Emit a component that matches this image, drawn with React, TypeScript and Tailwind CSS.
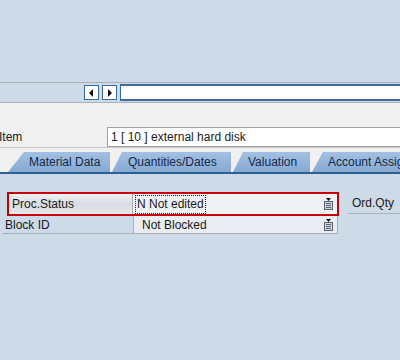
const TABS = [
  { label: 'Material Data', cls: 'ml-[8px] w-[102px] pl-[21px] [clip-path:polygon(16px_0,100%_0,100%_100%,0_100%)]' },
  { label: 'Quantities/Dates', cls: 'w-[119px] pl-[16px] [clip-path:polygon(10px_0,100%_0,100%_100%,0_100%)]' },
  { label: 'Valuation', cls: 'w-[77px] pl-[15px] [clip-path:polygon(10px_0,100%_0,100%_100%,0_100%)]' },
  { label: 'Account Assignment', cls: 'flex-1 pl-[16px] [clip-path:polygon(11px_0,100%_0,100%_100%,0_100%)]' },
];

function ArrowButton({ dir }: { dir: 'left' | 'right' }) {
  return (
    <div className="w-[15px] h-[15px] bg-white border border-[#3a6b9c] flex items-center justify-center">
      <svg width="5" height="8" viewBox="0 0 5 8">
        {dir === 'left' ? <path d="M4 0 L0 4 L4 8 Z" fill="#111" /> : <path d="M1 0 L5 4 L1 8 Z" fill="#111" />}
      </svg>
    </div>
  );
}

function DropIcon() {
  return (
    <svg width="9" height="12" viewBox="0 0 9 12" className="shrink-0">
      <path d="M2 0 H7 L4.5 3 Z" fill="#111" />
      <rect x="0.5" y="3.5" width="8" height="8" fill="#c9d6e3" stroke="#5b6570" />
      <line x1="2" y1="5.5" x2="7" y2="5.5" stroke="#5b6570" />
      <line x1="2" y1="7.5" x2="7" y2="7.5" stroke="#5b6570" />
      <line x1="2" y1="9.5" x2="7" y2="9.5" stroke="#5b6570" />
    </svg>
  );
}

export default function App() {
  return (
    <div className="w-[400px] h-[360px] overflow-hidden bg-[#cddbe9] font-['Liberation_Sans',Arial,sans-serif] text-[12px] text-[#1a1a1a]">
      <div className="h-[82px]" />

      {/* scroll strip */}
      <div className="h-[21px] border-y border-[#aab0b7] flex items-center">
        <div className="ml-[84px] flex gap-[3px]">
          <ArrowButton dir="left" />
          <ArrowButton dir="right" />
        </div>
        <div className="ml-[3px] flex-1 h-[17px] bg-white border-y-2 border-l border-[#3a6b9c]" />
      </div>

      <div className="bg-[#f0f0f0]">
        <div className="h-[24px]" />
        {/* item row */}
        <div className="h-[20px] flex items-center">
          <div className="w-[108px] -ml-px">Item</div>
          <div className="flex-1 h-[20px] bg-white border border-[#a3a3a3] border-r-0 pl-[3px] flex items-center">
            1 [ 10 ] external hard disk
          </div>
        </div>
        <div className="h-px bg-[#c9c9c9]" />

        {/* tabs */}
        <div className="pt-[4px] flex gap-[2px] overflow-hidden">
          {TABS.map((t) => (
            <div
              key={t.label}
              className={`h-[20px] shrink-0 flex items-center whitespace-nowrap text-[#14284a] bg-gradient-to-b from-[#a2c0e1] to-[#87aad2] ${t.cls}`}
            >
              {t.label}
            </div>
          ))}
        </div>
        <div className="h-[2px] bg-[#2f5f90]" />
      </div>

      {/* fields */}
      <div className="pt-[18px]">
        <div className="flex items-end">
          <div className="ml-[7px] w-[332px] h-[24px] border-2 border-[#c40000] flex">
            <div className="w-[124px] flex items-center pl-[3px] bg-gradient-to-b from-[#eef0f3] via-[#d8dde3] to-[#e6e9ed] border-r border-[#a8aeb5]">
              Proc.Status
            </div>
            <div className="flex-1 flex items-center bg-[#eef0f3] pl-[2px] pr-[4px]">
              <div className="h-[19px] px-[1px] flex items-center border border-dotted border-[#222]">N Not edited</div>
              <div className="flex-1" />
              <DropIcon />
            </div>
          </div>
          <div className="ml-[9px] flex-1 h-[21px] border-b border-[#a9b0b8] pl-[4px] flex items-center mb-[2px]">
            Ord.Qty
          </div>
        </div>
        <div className="flex h-[18px]">
          <div className="ml-[3px] w-[130px] border-b border-[#a9b0b8] pl-[2px] flex items-center">Block ID</div>
          <div className="w-[205px] border border-t-0 border-[#a9b0b8] bg-[#e9edf1] flex items-center pl-[8px] pr-[4px]">
            Not Blocked
            <div className="flex-1" />
            <DropIcon />
          </div>
        </div>
      </div>
    </div>
  );
}
